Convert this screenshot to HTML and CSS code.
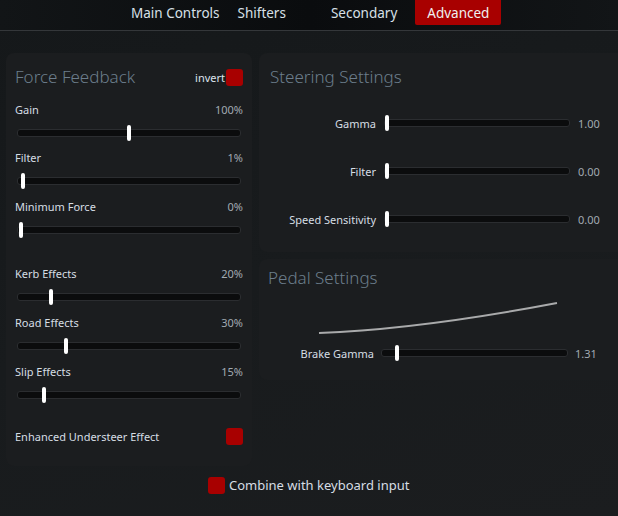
FILE: index.html
```html
<!DOCTYPE html>
<html>
<head>
<meta charset="utf-8">
<link rel="stylesheet" href="styles.css">
</head>
<body>
<nav class="tabs">
  <a class="tab tab-main">Main Controls</a>
  <a class="tab tab-shifters">Shifters</a>
  <a class="tab tab-secondary">Secondary</a>
  <a class="tab tab-advanced active">Advanced</a>
</nav>
<main class="content">
  <section class="panel ffb">
    <div class="panel-head">
      <h2 class="title">Force Feedback</h2>
      <label class="invert">invert <span class="check"></span></label>
    </div>
    <div class="slider-block first">
      <div class="row"><span class="lbl">Gain</span><span class="val">100%</span></div>
      <div class="track"><span class="thumb" style="left:109px"></span></div>
    </div>
    <div class="slider-block">
      <div class="row"><span class="lbl">Filter</span><span class="val">1%</span></div>
      <div class="track"><span class="thumb" style="left:3px"></span></div>
    </div>
    <div class="slider-block">
      <div class="row"><span class="lbl">Minimum Force</span><span class="val">0%</span></div>
      <div class="track"><span class="thumb" style="left:1px"></span></div>
    </div>
    <div class="spacer"></div>
    <div class="slider-block">
      <div class="row"><span class="lbl">Kerb Effects</span><span class="val">20%</span></div>
      <div class="track"><span class="thumb" style="left:31px"></span></div>
    </div>
    <div class="slider-block">
      <div class="row"><span class="lbl">Road Effects</span><span class="val">30%</span></div>
      <div class="track"><span class="thumb" style="left:46px"></span></div>
    </div>
    <div class="slider-block">
      <div class="row"><span class="lbl">Slip Effects</span><span class="val">15%</span></div>
      <div class="track"><span class="thumb" style="left:24px"></span></div>
    </div>
    <div class="option">
      <span class="lbl">Enhanced Understeer Effect</span><span class="check"></span>
    </div>
  </section>
  <div class="right-col">
    <section class="panel steering">
      <h2 class="title">Steering Settings</h2>
      <div class="hrow">
        <span class="hlbl">Gamma</span>
        <div class="track"><span class="thumb" style="left:0px"></span></div>
        <span class="val">1.00</span>
      </div>
      <div class="hrow">
        <span class="hlbl">Filter</span>
        <div class="track"><span class="thumb" style="left:0px"></span></div>
        <span class="val">0.00</span>
      </div>
      <div class="hrow">
        <span class="hlbl">Speed Sensitivity</span>
        <div class="track"><span class="thumb" style="left:0px"></span></div>
        <span class="val">0.00</span>
      </div>
    </section>
    <section class="panel pedal">
      <h2 class="title">Pedal Settings</h2>
      <svg class="curve" width="260" height="40" viewBox="0 0 260 40">
        <path d="M1 33 C 80 30, 160 18, 239 3" fill="none" stroke="#a9aaab" stroke-width="2"/>
      </svg>
      <div class="hrow brake">
        <span class="hlbl">Brake Gamma</span>
        <div class="track"><span class="thumb" style="left:13px"></span></div>
        <span class="val">1.31</span>
      </div>
    </section>
  </div>
</main>
<footer class="combine">
  <span class="check"></span><span class="combine-text">Combine with keyboard input</span>
</footer>
</body>
</html>
```

FILE: styles.css
```css
* { box-sizing: border-box; }
html, body { margin: 0; padding: 0; }
body {
  width: 618px;
  height: 516px;
  overflow: hidden;
  font-family: "Noto Sans", "Open Sans", sans-serif;
  color: #d6dde4;
  background: linear-gradient(160deg, #15181a 0%, #181b1d 50%, #1b1d1f 100%);
}
.tabs {
  height: 31px;
  background: linear-gradient(90deg, #121517 0%, #0a0c0e 50%, #121517 100%);
  border-bottom: 1px solid #34373a;
  display: flex;
  padding-left: 131px;
}
.tab {
  display: block;
  height: 25px;
  padding: 0;
  font-size: 13.5px;
  line-height: 26px;
  color: #d8e0e8;
}
.tab-shifters { margin-left: 18px; }
.tab-secondary { margin-left: 45px; }
.tab-advanced { margin-left: 18px; }
.tab.active {
  background: #a80000;
  color: #f0f0f0;
  border-radius: 0 0 2px 2px;
  padding: 0 12px;
}
.content {
  display: flex;
  gap: 7px;
  padding: 22px 0 0 6px;
  width: 640px;
}
.panel {
  background: #1b1d1f;
  border-radius: 8px;
}
.ffb {
  flex: none;
  width: 246px;
  height: 413px;
  padding: 12px 9px 0 9px;
}
.panel-head {
  display: flex;
  align-items: center;
  justify-content: space-between;
  height: 24px;
  margin-bottom: 13px;
}
.title {
  margin: 0;
  font-size: 17px;
  font-weight: 300;
  color: #6c7d8c;
  line-height: 24px;
}
.invert {
  display: flex;
  align-items: center;
  gap: 1px;
  font-size: 11px;
  color: #dce4ec;
}
.check {
  display: inline-block;
  width: 17px;
  height: 17px;
  background: #a80000;
  border-radius: 3px;
}
.slider-block {
  height: 49px;
}
.slider-block.first { height: 48px; }
.row {
  display: flex;
  justify-content: space-between;
  height: 16px;
  line-height: 16px;
}
.lbl {
  font-size: 11px;
  color: #d6dde4;
}
.val {
  font-size: 11px;
  color: #a1aab2;
}
.slider-block .track {
  margin: 11px 2px 0 2px;
}
.track {
  position: relative;
  height: 8px;
  background: #0b0c0d;
  border: 1px solid #2b2d30;
  border-radius: 3px;
}
.thumb {
  position: absolute;
  top: -5px;
  width: 4px;
  height: 16px;
  background: #ffffff;
  border-radius: 2px;
}
.spacer { height: 18px; }
.option {
  display: flex;
  justify-content: space-between;
  align-items: center;
  height: 18px;
  margin-top: 14px;
}
.right-col {
  display: flex;
  flex-direction: column;
  gap: 7px;
  flex: 1;
}
.steering {
  height: 199px;
  padding: 12px 0 0 11px;
}
.hrow {
  display: grid;
  grid-template-columns: 106px 186px auto;
  column-gap: 8px;
  align-items: center;
  height: 16px;
}
.steering .title { margin-bottom: 26px; }
.steering .hrow { margin-bottom: 32px; }
.hlbl {
  font-size: 11px;
  text-align: right;
  color: #d6dde4;
}
.pedal {
  height: 121px;
  padding: 7px 0 0 9px;
}
.curve {
  display: block;
  margin: 10px 0 0 50px;
}
.brake {
  grid-template-columns: 106px 187px auto;
  column-gap: 7px;
  margin-top: 5px;
}
.combine {
  display: flex;
  align-items: center;
  gap: 4px;
  padding-left: 208px;
  margin-top: 10px;
}
.combine-text {
  font-size: 13px;
  color: #d6dde4;
}
```
